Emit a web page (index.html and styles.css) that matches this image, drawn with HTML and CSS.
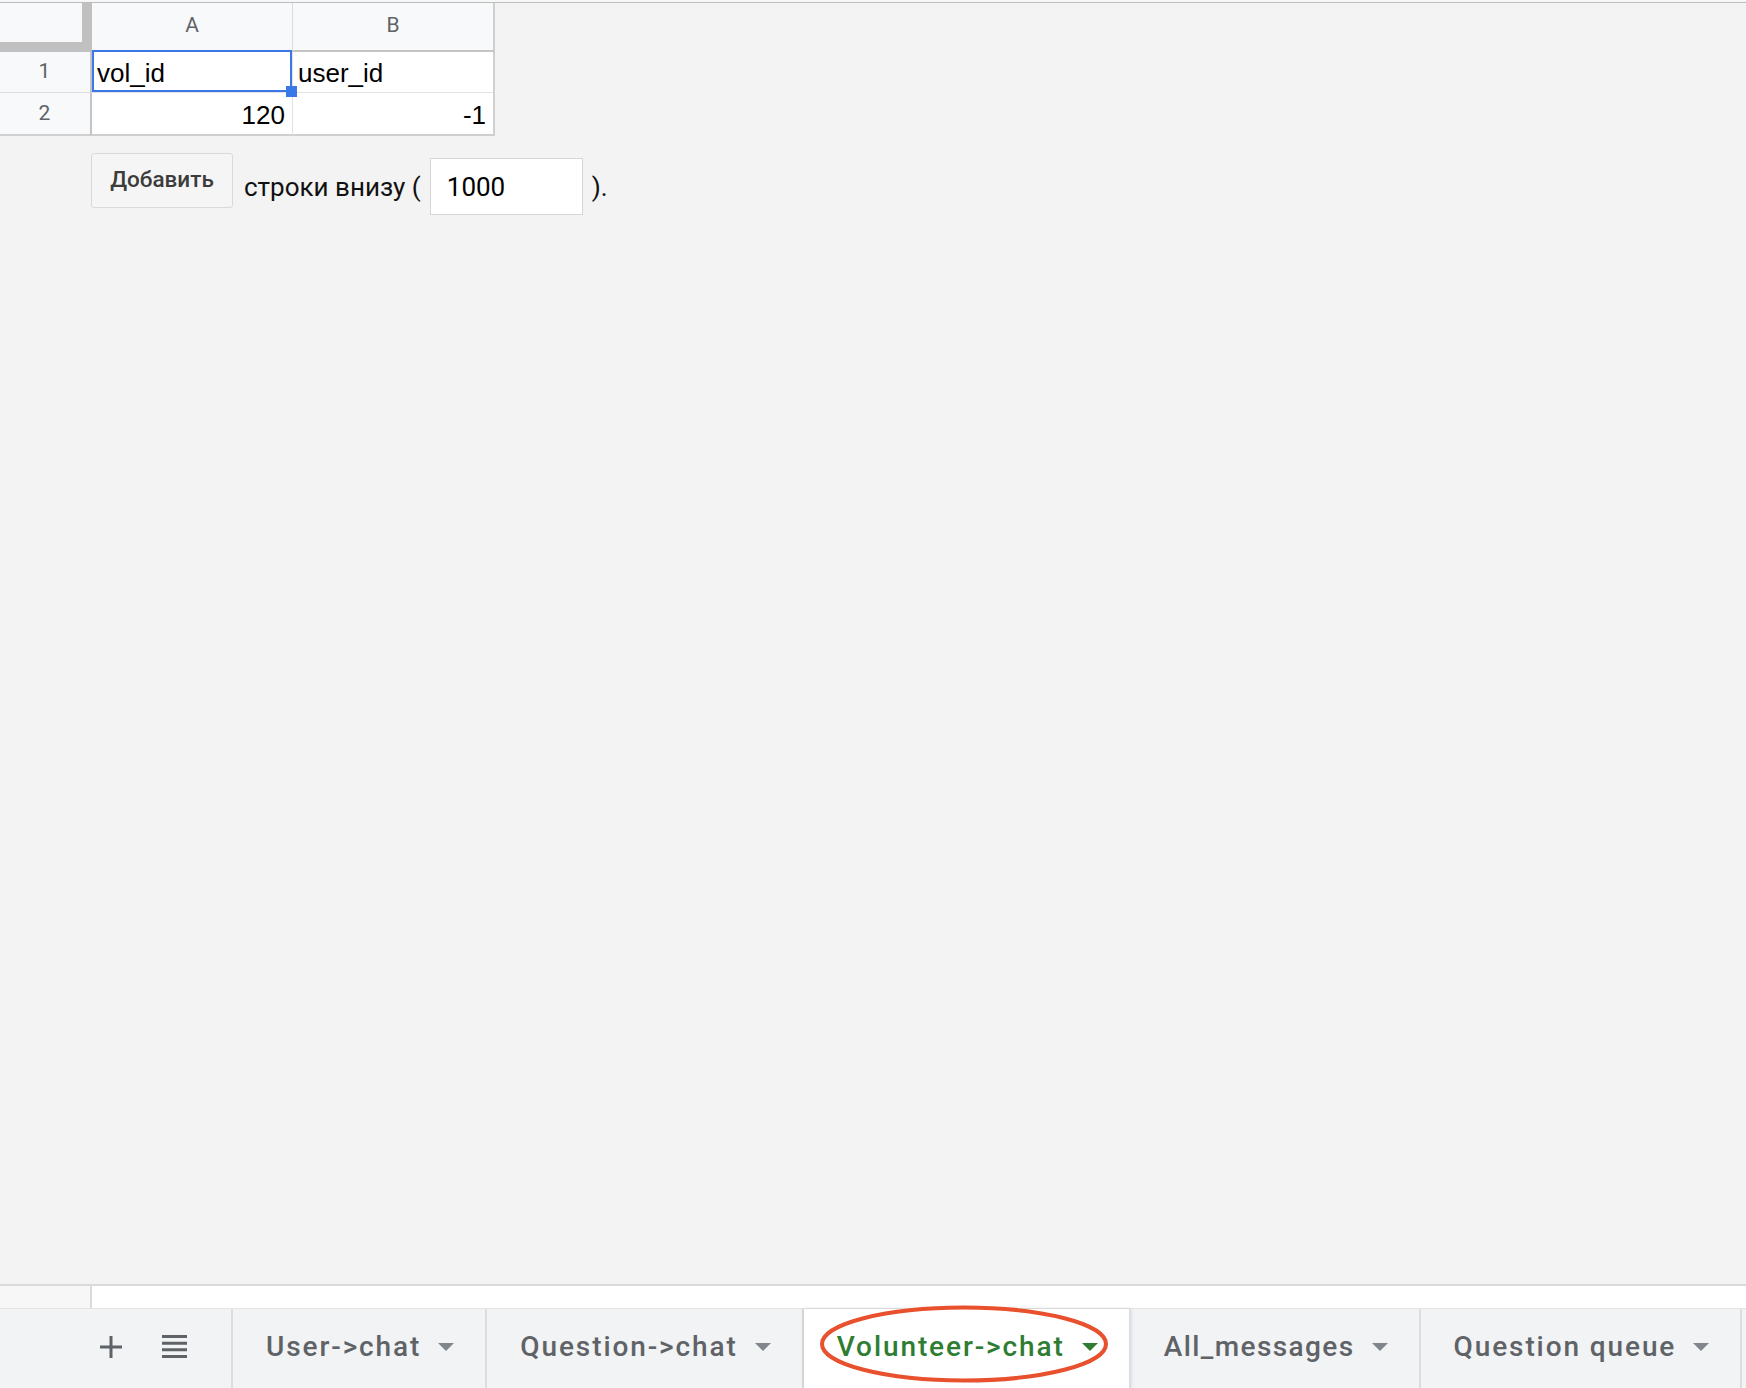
FILE: index.html
```html
<!DOCTYPE html>
<html lang="ru">
<head>
<meta charset="utf-8">
<title>Volunteer-&gt;chat</title>
<link rel="stylesheet" href="styles.css">
</head>
<body>
<div class="page">
  <div class="topbar"></div>
  <div class="grid">
    <div class="corner"></div>
    <div class="colhead">A</div>
    <div class="colhead last-col">B</div>
    <div class="rowhead">1</div>
    <div class="cell sel">vol_id</div>
    <div class="cell last-col">user_id</div>
    <div class="rowhead last-row">2</div>
    <div class="cell num last-row">120</div>
    <div class="cell num last-row last-col">-1</div>
  </div>
  <div class="addrow">
    <button class="btn" type="button">Добавить</button>
    <span class="addtext">строки внизу (</span>
    <input class="rows-input" type="text" value="1000">
    <span class="addtext">).</span>
  </div>
  <div class="spacer"></div>
  <div class="hscroll">
    <div class="hs-left"></div>
    <div class="hs-track"></div>
  </div>
  <div class="tabbar">
    <div class="tools">
      <svg class="ico-plus" width="22" height="22" viewBox="0 0 22 22"><path d="M9.5 0h3v9.5H22v3h-9.5V22h-3v-9.5H0v-3h9.5z" fill="#5f6368"/></svg>
      <svg class="ico-list" width="25" height="23" viewBox="0 0 25 23"><path d="M0 0h25v3H0zM0 6.7h25v3H0zM0 13.3h25v3H0zM0 20h25v3H0z" fill="#5f6368"/></svg>
    </div>
    <div class="tab"><span>User-&gt;chat</span><i class="caret"></i></div>
    <div class="tab"><span>Question-&gt;chat</span><i class="caret"></i></div>
    <div class="tab active"><span>Volunteer-&gt;chat</span><i class="caret"></i>
      <svg class="circle" width="292" height="80" viewBox="0 0 292 80"><ellipse cx="146" cy="40" rx="142" ry="36.5" fill="none" stroke="#e8502e" stroke-width="4"/></svg>
    </div>
    <div class="tab narrow"><span>All_messages</span><i class="caret"></i></div>
    <div class="tab"><span>Question queue</span><i class="caret"></i></div>
  </div>
</div>
</body>
</html>
```
FILE: styles.css
```css
html, body {
  margin: 0;
  padding: 0;
}
body {
  background: #f3f3f3;
  font-family: Roboto, "Liberation Sans", Arial, sans-serif;
}
.page {
  display: flex;
  flex-direction: column;
  height: 1388px;
  overflow: hidden;
}
.topbar {
  height: 2px;
  background: #f7f7f7;
  border-bottom: 1px solid #bdbdbd;
  flex: none;
}
.grid {
  display: grid;
  grid-template-columns: 92px 201px 202px;
  grid-template-rows: 49px 41px 43px;
  width: 495px;
  flex: none;
}
.grid > div {
  box-sizing: border-box;
}
.corner {
  background: #f8f9fa;
  border-right: 10px solid #c0c0c0;
  border-bottom: 10px solid #c0c0c0;
}
.colhead {
  background: #f8f9fa;
  border-right: 1px solid #dcdcdc;
  border-bottom: 2px solid #c4c4c4;
  display: flex;
  align-items: center;
  justify-content: center;
  font-family: Roboto, "Liberation Sans", sans-serif;
  font-size: 21px;
  color: #5f6368;
  padding-bottom: 3px;
}
.rowhead {
  background: #f8f9fa;
  border-right: 2px solid #c4c4c4;
  border-bottom: 1px solid #dcdcdc;
  display: flex;
  align-items: center;
  justify-content: center;
  font-family: Roboto, "Liberation Sans", sans-serif;
  font-size: 21px;
  color: #5f6368;
  padding-right: 1px;
  padding-bottom: 2px;
}
.cell {
  background: #fff;
  border-right: 1px solid #e2e2e2;
  border-bottom: 1px solid #e2e2e2;
  display: flex;
  align-items: center;
  font-family: "Liberation Sans", Arial, sans-serif;
  font-size: 26px;
  color: #000;
  padding: 3px 6px 0 5px;
  position: relative;
}
.num {
  justify-content: flex-end;
  padding-right: 7px;
}
.last-col {
  border-right: 2px solid #cfcfcf !important;
}
.last-row {
  border-bottom: 2px solid #cfcfcf !important;
}
.sel {
  z-index: 2;
}
.sel::after {
  content: "";
  position: absolute;
  top: -2px;
  left: 0;
  right: 0;
  bottom: 0;
  border: 2px solid #3b78e7;
  pointer-events: none;
}
.sel::before {
  content: "";
  position: absolute;
  right: -5px;
  bottom: -5px;
  width: 11px;
  height: 11px;
  background: #3b78e7;
  z-index: 3;
}
.addrow {
  display: flex;
  align-items: center;
  margin: 17px 0 0 91px;
  height: 67px;
  flex: none;
}
.btn {
  box-sizing: border-box;
  width: 142px;
  height: 55px;
  margin: 0 11px 12px 0;
  border: 1px solid #d9d9d9;
  border-radius: 3px;
  background: #f5f5f5;
  font-family: Roboto, "Liberation Sans", sans-serif;
  font-weight: 500;
  font-size: 22.5px;
  color: #3c3c3c;
  padding: 0 0 4px 0;
}
.addtext {
  font-family: Roboto, "Liberation Sans", sans-serif;
  font-size: 26px;
  color: #111;
}
.rows-input {
  box-sizing: border-box;
  width: 153px;
  height: 57px;
  margin: 0 9px;
  border: 1px solid #d6d6d6;
  background: #fff;
  font-family: Roboto, "Liberation Sans", sans-serif;
  font-size: 26px;
  color: #000;
  padding: 0 0 0 16px;
  outline: none;
}
.spacer {
  flex: 1;
}
.hscroll {
  display: flex;
  height: 22px;
  border-top: 2px solid #dadada;
  border-bottom: 1px solid #e4e4e4;
  flex: none;
}
.hs-left {
  width: 90px;
  background: #f7f7f7;
  border-right: 2px solid #dadada;
}
.hs-track {
  flex: 1;
  background: #fff;
}
.tabbar {
  display: flex;
  height: 79px;
  background: #f1f3f4;
  flex: none;
}
.tools {
  flex: none;
  width: 233px;
  display: flex;
  align-items: center;
  padding-left: 100px;
  box-sizing: border-box;
  gap: 40px;
  border-right: 2px solid #dcdde0;
  padding-bottom: 4px;
}
.tab {
  flex: none;
  white-space: nowrap;
  display: flex;
  align-items: center;
  gap: 17px;
  padding: 0 31px 4px 33px;
  border-right: 2px solid #dcdde0;
  font-family: Roboto, "Liberation Sans", sans-serif;
  font-weight: 500;
  font-size: 28px;
  letter-spacing: 1.9px;
  color: #5f6368;
  position: relative;
}
.tab.narrow {
  letter-spacing: 1.4px;
}
.caret {
  width: 0;
  height: 0;
  border-left: 8px solid transparent;
  border-right: 8px solid transparent;
  border-top: 8px solid #80868b;
}
.tab.active {
  background: #fff;
  color: #2e7d32;
  box-shadow: 0 0 4px rgba(0, 0, 0, 0.12);
  z-index: 1;
}
.tab.active .caret {
  border-top-color: #2e7d32;
}
.circle {
  position: absolute;
  left: 14px;
  top: -5px;
  overflow: visible;
  pointer-events: none;
}
```
